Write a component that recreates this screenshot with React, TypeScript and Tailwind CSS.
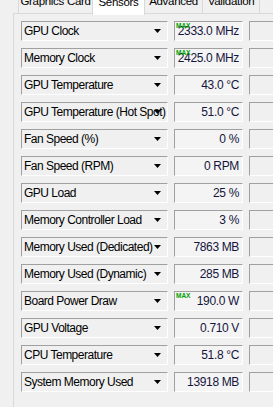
import React from "react";

type Sensor = { name: string; value: string; max?: boolean };

const sensors: Sensor[] = [
  { name: "GPU Clock", value: "2333.0 MHz", max: true },
  { name: "Memory Clock", value: "2425.0 MHz", max: true },
  { name: "GPU Temperature", value: "43.0 °C" },
  { name: "GPU Temperature (Hot Spot)", value: "51.0 °C" },
  { name: "Fan Speed (%)", value: "0 %" },
  { name: "Fan Speed (RPM)", value: "0 RPM" },
  { name: "GPU Load", value: "25 %" },
  { name: "Memory Controller Load", value: "3 %" },
  { name: "Memory Used (Dedicated)", value: "7863 MB" },
  { name: "Memory Used (Dynamic)", value: "285 MB" },
  { name: "Board Power Draw", value: "190.0 W", max: true },
  { name: "GPU Voltage", value: "0.710 V" },
  { name: "CPU Temperature", value: "51.8 °C" },
  { name: "System Memory Used", value: "13918 MB" },
];

const tabs = [
  { label: "Graphics Card", w: "w-[75px]" },
  { label: "Sensors", w: "w-[53px]", active: true },
  { label: "Advanced", w: "w-[59px]" },
  { label: "Validation", w: "w-[58px]" },
];

function Row({ s }: { s: Sensor }) {
  return (
    <div className="flex h-[20px] mb-[7px] gap-[6px]">
      {/* sensor name with dropdown */}
      <div className="relative w-[147px] shrink-0 flex items-center border-t border-l border-t-[#a0a0a0] border-l-[#a0a0a0] border-b border-r border-b-white border-r-white bg-[#f0f0f0] overflow-hidden">
        <span className="pl-[2px] whitespace-nowrap text-[12px] tracking-[-0.5px] text-black">
          {s.name}
        </span>
        <svg
          width="7"
          height="4"
          viewBox="0 0 7 4"
          className="absolute right-[6px] top-[7px]"
        >
          <polygon points="0,0 7,0 3.5,4" fill="#000" />
        </svg>
      </div>
      {/* value */}
      <div className="relative w-[69px] shrink-0 flex items-center justify-end border-t border-l border-t-[#a0a0a0] border-l-[#a0a0a0] border-b border-r border-b-white border-r-white bg-[#f4f4f4]">
        {s.max && (
          <span className="absolute left-[1px] top-[1px] text-[6.5px] font-bold leading-none text-[#00a000]">
            MAX
          </span>
        )}
        <span className="pr-[3px] whitespace-nowrap text-[12px] tracking-[-0.35px] text-[#14143c]">
          {s.value}
        </span>
      </div>
      {/* graph */}
      <div className="w-[60px] shrink-0 border-t border-l border-t-[#a0a0a0] border-l-[#a0a0a0] border-b border-b-white bg-[#f0f0f0]" />
    </div>
  );
}

export default function App() {
  return (
    <div
      className="w-[273px] h-[407px] overflow-hidden bg-[#f0f0f0]"
      style={{ fontFamily: '"Liberation Sans", Arial, sans-serif' }}
    >
      {/* tab strip, top cut off */}
      <div className="flex items-end h-[20px] mt-[-7px] pl-[19px]">
        {tabs.map((t) =>
          t.active ? (
            <div
              key={t.label}
              className={`${t.w} relative z-10 h-[23px] mb-[-2px] -ml-px bg-white border-l border-r border-[#d9d9d9] flex justify-center pt-[2px] whitespace-nowrap text-[11.5px] tracking-[-0.3px] text-black`}
            >
              {t.label}
            </div>
          ) : (
            <div
              key={t.label}
              className={`${t.w} h-[20px] bg-[#f0f0f0] border-l border-r border-[#d9d9d9] -ml-px flex justify-center pt-[0px] whitespace-nowrap text-[11.5px] tracking-[-0.3px] text-black`}
            >
              {t.label}
            </div>
          )
        )}
      </div>
      {/* tab panel */}
      <div className="ml-[13px] border-l border-t border-[#d9d9d9] pt-[7px] pl-[7px] h-[400px]">
        {sensors.map((s) => (
          <Row key={s.name} s={s} />
        ))}
      </div>
    </div>
  );
}
